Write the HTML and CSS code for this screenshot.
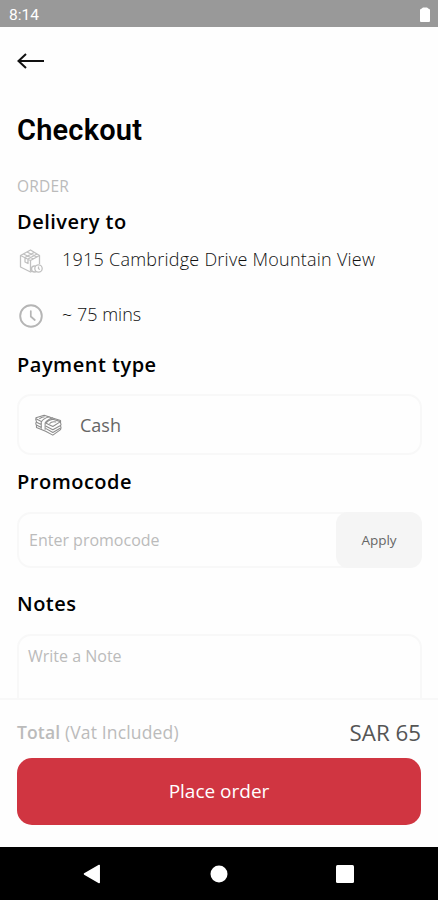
FILE: index.html
```
<!DOCTYPE html>
<html lang="en">
<head>
    <meta charset="UTF-8">
    <meta name="viewport" content="width=device-width, initial-scale=1.0">
    <title>Checkout</title>
    <link rel="stylesheet" href="styles.css">
</head>
<body>
    <div class="status-bar">
        <span class="time">8:14</span>
        <svg class="battery" width="10" height="16" viewBox="0 0 10 16"><path d="M1 2L3 0.500h4L9 2q1 0 1 1v11q0 1-1 1H1q-1 0-1-1V3q0-1 1-1z" fill="#fff"/></svg>
    </div>
    <main class="content">
        <a class="back" href="#" aria-label="Back">
            <svg width="28" height="18" viewBox="0 0 28 18" fill="none" stroke="#111"><path d="M1 9h26" stroke-width="2"/><path d="M9 2L1.500 9 9 16" stroke-width="2"/></svg>
        </a>
        <h1>Checkout</h1>
        <p class="section-label">ORDER</p>

        <h2 class="delivery-title">Delivery to</h2>
        <div class="info-row address">
            <svg width="28" height="28" viewBox="0 0 28 28" fill="none" stroke="#c0c0c0" stroke-width="1.300" stroke-linejoin="round">
                <path d="M17 23.500l-3.500 1.500L3.500 20V8.500L13.500 3l9 5.500v8.500"/>
                <path d="M3.500 8.500l10 5 9-5M13.500 13.500v11M6.500 7l10 5M10 5l10 5M8 10.500l9-5M11 12l9-5M8 11v4l3 1.500v-4"/>
                <circle cx="17.500" cy="22" r="3" fill="#fff"/>
                <circle cx="21.500" cy="21.500" r="3.700" fill="#fff"/>
                <path d="M21.500 19.500v2.200l1.500.8"/>
            </svg>
            <span class="address-text">1915 Cambridge Drive Mountain View</span>
        </div>
        <div class="info-row duration">
            <svg width="28" height="28" viewBox="0 0 28 28" fill="none" stroke="#b5b5b5" stroke-width="1.900" stroke-linecap="round">
                <circle cx="14" cy="14" r="10.800"/>
                <path d="M13.800 9v5.500l4 3.500" stroke-width="1.700"/>
            </svg>
            <span class="duration-text">~ 75 mins</span>
        </div>

        <h2>Payment type</h2>
        <div class="payment">
            <svg width="27" height="22" viewBox="0 0 28 22" fill="none" stroke="#8c8c8c" stroke-width="1.100" stroke-linejoin="round">
                <path d="M1 3.500L9.500 0.800l7 2.500 10 3v2.500l.5 1.500-.5 1.500.5 2-.5 2L18.500 21.500 11 17.500 1.500 13.500v-2L.8 9.500l.7-2L.8 5.500z"/>
                <path d="M1 4.500l5.500 2.800M1 8l5.500 2.500M1.500 11l5 2.500M6.500 15V8q2-4 8.500-5.500M10.500 16V9q2-3.500 8-5.500"/>
                <path d="M11 9q3-3.500 7.500-4l8 2.500-8 5zM11 12l7.500 4 8-4.500M11 14.500l7.500 4.200 8-4.500"/>
                <path d="M4.500 4.500q3-2 5.500-2M15 9.500q2.500-2.500 7-1.500"/>
            </svg>
            <span>Cash</span>
        </div>

        <h2>Promocode</h2>
        <form class="promo">
            <input type="text" placeholder="Enter promocode">
            <button type="button" class="apply">Apply</button>
        </form>

        <h2 class="notes-title">Notes</h2>
        <textarea class="notes" placeholder="Write a Note"></textarea>
    </main>
    <footer class="summary">
        <div class="total">
            <span class="total-label"><b>Total</b> (Vat Included)</span>
            <span class="price">SAR 65</span>
        </div>
        <button type="button" class="place-order">Place order</button>
    </footer>
    <nav class="nav-bar">
        <svg width="18" height="20" viewBox="0 0 18 20"><path d="M1.500 10L16.200 1.500v17z" fill="#fff" stroke="#fff" stroke-width="1.500" stroke-linejoin="round"/></svg>
        <svg width="18" height="18" viewBox="0 0 18 18"><circle cx="9" cy="9" r="8.500" fill="#fff"/></svg>
        <svg width="18" height="18" viewBox="0 0 18 18"><rect width="18" height="18" rx="1.500" fill="#fff"/></svg>
    </nav>
</body>
</html>
```
FILE: styles.css
```
* {
    box-sizing: border-box;
}
body {
    display: flex;
    flex-direction: column;
    height: 900px;
    margin: 0;
    overflow: hidden;
    background-color: #fefefe;
    font-family: "Open Sans", "Noto Sans", sans-serif;
    color: #000;
}
h1, h2, p {
    margin: 0;
}
input, textarea, button {
    font-family: inherit;
    border: none;
    outline: none;
}
.status-bar {
    display: flex;
    flex-shrink: 0;
    justify-content: space-between;
    align-items: center;
    height: 27px;
    padding: 2px 8px 0 9px;
    background-color: #999;
}
.time {
    font-family: Roboto, sans-serif;
    font-size: 15.500px;
    line-height: 20px;
    color: #fff;
}
.content {
    flex: 1;
    min-height: 0;
    overflow: hidden;
    padding: 0 16px 0 17px;
}
.back {
    display: block;
    height: 18px;
    margin-top: 25px;
}
.back svg {
    display: block;
}
h1 {
    margin-top: 43px;
    font-family: Roboto, sans-serif;
    font-size: 29px;
    font-weight: 600;
    letter-spacing: 0.2px;
    line-height: 34px;
}
.section-label {
    margin-top: 29px;
    font-size: 15.500px;
    letter-spacing: 0.2px;
    line-height: 20px;
    color: #bbb;
}
h2 {
    font-size: 20px;
    font-weight: 600;
    letter-spacing: 0.5px;
    line-height: 28px;
}
.delivery-title {
    margin-top: 12px;
}
.info-row {
    display: flex;
    align-items: center;
    gap: 17px;
    height: 28px;
    font-size: 18px;
    font-weight: 300;
    color: #111;
}
.address {
    margin-top: 11px;
}
.address-text {
    padding-bottom: 5px;
    letter-spacing: 0.24px;
}
.duration {
    margin: 27px 0 21px;
}
.duration-text {
    padding-bottom: 4px;
}
.payment {
    display: flex;
    align-items: center;
    gap: 18px;
    height: 61px;
    margin: 15px 0 13px;
    padding: 0 17px 0 16px;
    border: 2px solid #f8f8f8;
    border-radius: 14px;
    font-size: 18px;
    color: #666;
}
.promo {
    display: flex;
    height: 56px;
    margin: 16px 0 22px;
    border: 2px solid #f8f8f8;
    border-radius: 14px;
}
.promo input {
    flex: 1;
    min-width: 0;
    padding: 0 10px 1px;
    background: none;
    font-size: 16px;
}
.apply {
    width: 86px;
    margin: -2px -2px -2px 0;
    padding-bottom: 2px;
    border-radius: 12px;
    background-color: #f5f5f5;
    font-size: 13.500px;
    color: #666;
}
::placeholder {
    color: #bbb;
    opacity: 1;
}
.notes {
    display: block;
    width: 100%;
    height: 100px;
    margin-top: 16px;
    padding: 9px;
    border: 2px solid #f8f8f8;
    border-radius: 14px;
    background: none;
    font-size: 16px;
    line-height: 22px;
    resize: none;
}
.summary {
    flex-shrink: 0;
    height: 149px;
    padding: 16px 17px 0;
    border-top: 2px solid #f8f8f8;
}
.total {
    display: flex;
    justify-content: space-between;
    align-items: center;
    height: 32px;
    margin-bottom: 10px;
}
.total-label {
    font-size: 17.500px;
    letter-spacing: 0.15px;
    color: #bbb;
}
.total-label b {
    font-weight: 600;
}
.price {
    font-size: 22.300px;
    color: #555;
}
.place-order {
    display: block;
    width: 100%;
    height: 67px;
    padding-bottom: 3px;
    border-radius: 15px;
    background-color: #d03541;
    font-size: 19px;
    color: #fff;
}
.nav-bar {
    display: flex;
    flex-shrink: 0;
    justify-content: space-between;
    align-items: center;
    height: 53px;
    padding: 0 84px 0 83px;
    background-color: #000;
}
```
